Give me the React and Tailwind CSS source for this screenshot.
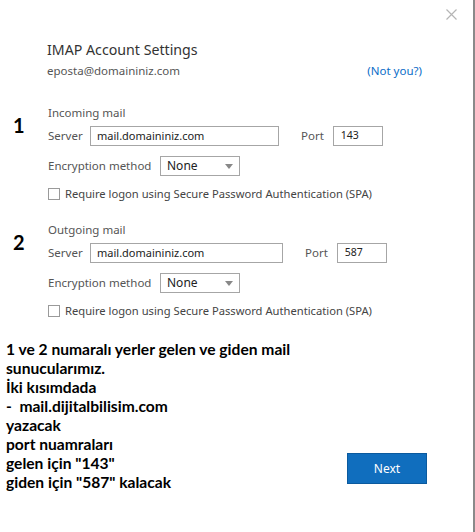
import React from "react";

const ui = { fontFamily: '"Noto Sans", "Open Sans", sans-serif' };
const note = { fontFamily: 'Lato, "Liberation Sans", sans-serif' };

function Section({ num, title, server, port, serverW, portGap }) {
  return (
    <div className="flex">
      <div className="w-[48px] pl-[13px] pt-[8px] text-[20px] font-bold leading-[24px] text-black" style={note}>
        {num}
      </div>
      <div className="flex flex-col">
        <div className="h-[16px] text-[11.5px] leading-[16px] text-[#555]">{title}</div>
        <div className="mt-[5px] flex h-[20px] items-center">
          <span className="w-[42px] text-[11.5px] text-[#555]">Server</span>
          <div className={`flex h-[20px] items-center border border-[#a6a6a6] pl-[6px] text-[11px] text-[#222] ${serverW}`}>
            {server}
          </div>
          <span className={`text-[11.5px] text-[#555] ${portGap}`}>Port</span>
          <div className="ml-[9px] flex h-[20px] w-[50px] items-center border border-[#a6a6a6] pl-[7px] text-[10.5px] text-[#222]">
            {port}
          </div>
        </div>
        <div className="mt-[10px] flex h-[20px] items-center">
          <span className="w-[112px] text-[11.5px] text-[#555]">Encryption method</span>
          <div className="flex h-[20px] w-[80px] items-center justify-between border border-[#a6a6a6] pl-[6px] pr-[6px] text-[12px] text-[#222]">
            <span>None</span>
            <svg width="8" height="5" viewBox="0 0 8 5"><path d="M0 0h8L4 5z" fill="#888" /></svg>
          </div>
        </div>
        <div className="mt-[11px] flex h-[14px] items-center">
          <div className="h-[12px] w-[12px] border border-[#9a9a9a] bg-white" />
          <span className="ml-[5px] text-[11.2px] text-[#444]">
            Require logon using Secure Password Authentication (SPA)
          </span>
        </div>
      </div>
    </div>
  );
}

export default function App() {
  return (
    <div className="relative h-[532px] w-[475px] overflow-hidden border-r-2 border-[#8a8a8a] bg-white" style={ui}>
      <svg className="absolute left-[446px] top-[9px]" width="11" height="11" viewBox="0 0 11 11">
        <path d="M0.5 0.5l10 10M10.5 0.5l-10 10" stroke="#b5b5b5" strokeWidth="1.2" />
      </svg>

      <div className="pl-[47px] pr-[51px] pt-[40px]">
        <div className="text-[14.2px] leading-[20px] text-[#333]">IMAP Account Settings</div>
        <div className="mt-[3px] flex justify-between text-[11.5px] leading-[16px]">
          <span className="text-[#555]">eposta@domaininiz.com</span>
          <span className="text-[#0a6cc7]">(Not you?)</span>
        </div>
      </div>

      <div className="mt-[26px]">
        <Section num="1" title="Incoming mail" server="mail.domaininiz.com" port="143" serverW="w-[189px]" portGap="ml-[22px]" />
      </div>
      <div className="mt-[21px]">
        <Section num="2" title="Outgoing mail" server="mail.domaininiz.com" port="587" serverW="w-[193px]" portGap="ml-[22px]" />
      </div>

      <div className="mt-[22px] flex items-end justify-between pl-[6px] pr-[46px]">
        <div className="text-[15.6px] font-bold leading-[19px] text-black" style={note}>
          <div>1 ve 2 numaralı yerler gelen ve giden mail</div>
          <div>sunucularımız.</div>
          <div>İki kısımdada</div>
          <div>-&nbsp; mail.dijitalbilisim.com</div>
          <div>yazacak</div>
          <div>port nuamraları</div>
          <div>gelen için "143"</div>
          <div>giden için "587" kalacak</div>
        </div>
        <button className="mb-[8px] h-[31px] w-[80px] border border-[#0b5a9e] bg-[#106ebe] text-[12px] text-white">
          Next
        </button>
      </div>
    </div>
  );
}
